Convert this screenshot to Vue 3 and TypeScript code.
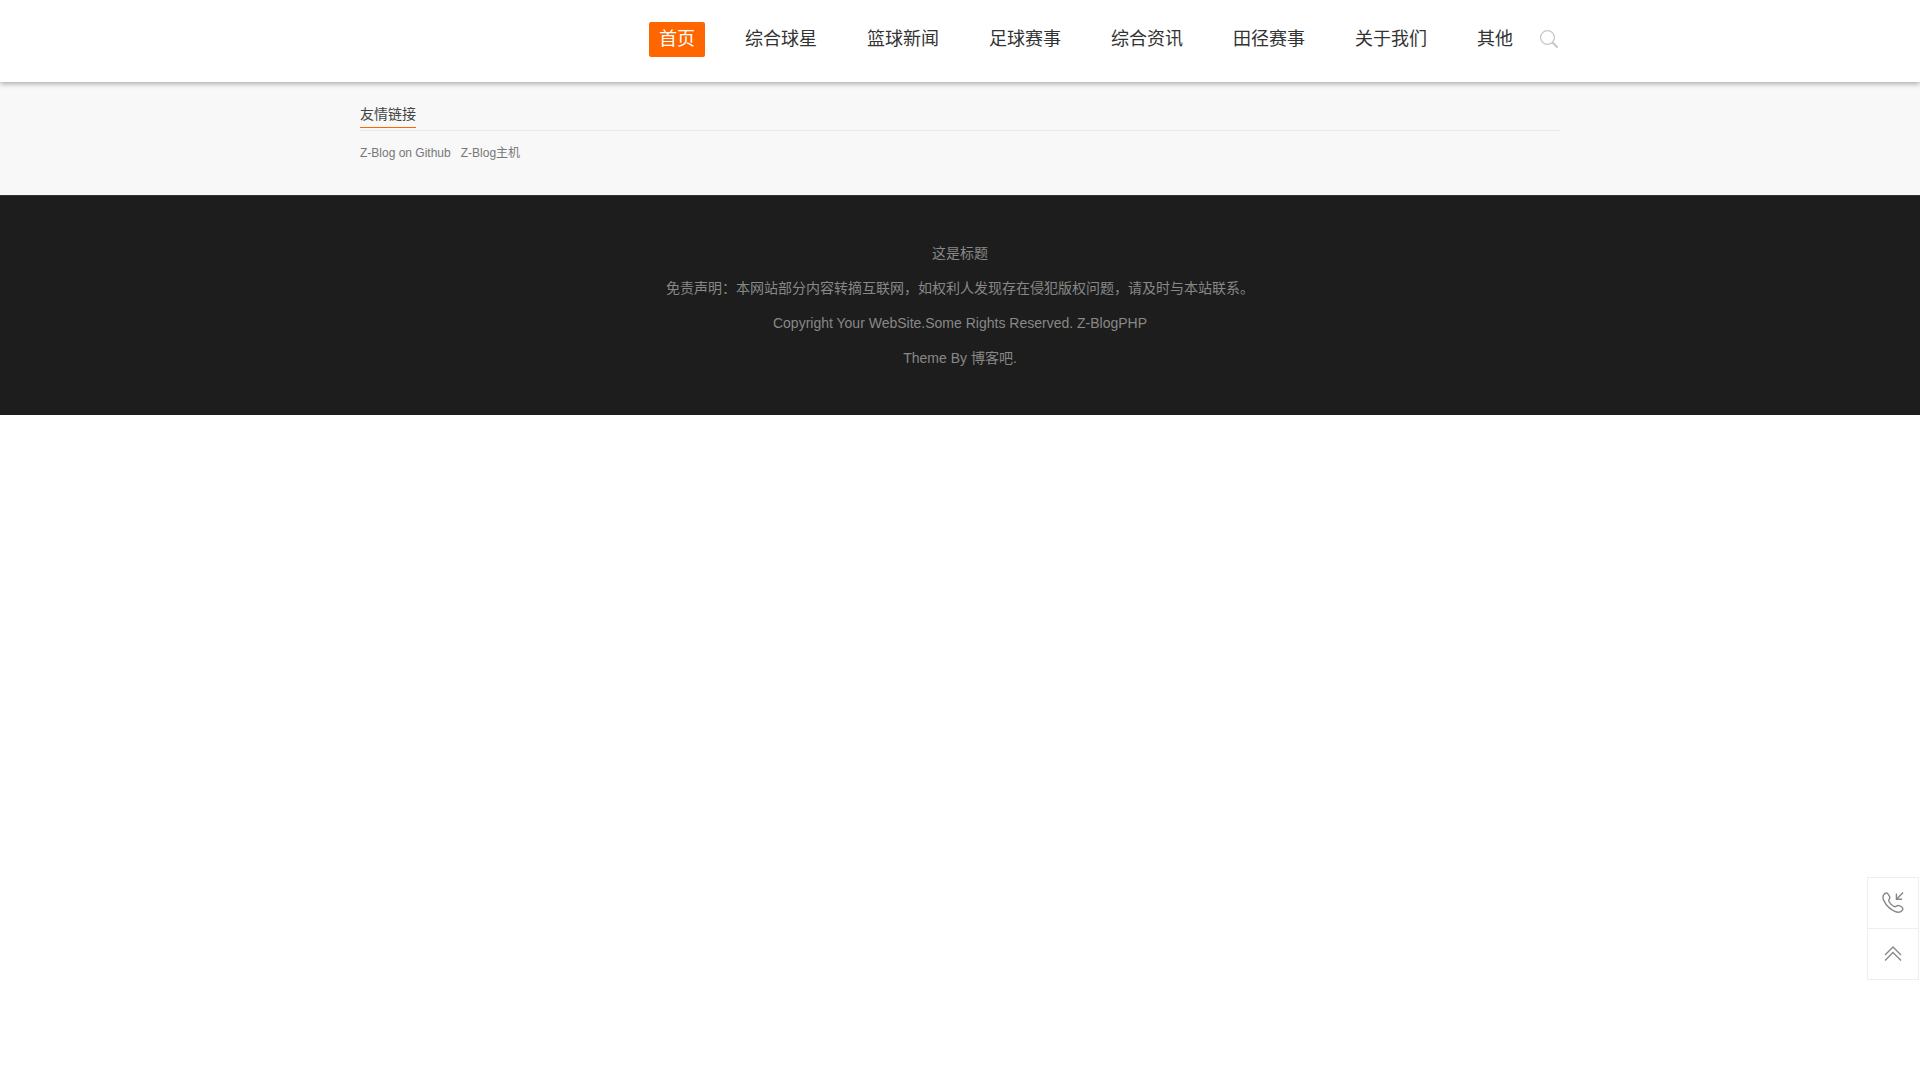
<script setup lang="ts">
interface NavItem {
  label: string
  active?: boolean
}

const navItems: NavItem[] = [
  { label: '首页', active: true },
  { label: '综合球星' },
  { label: '篮球新闻' },
  { label: '足球赛事' },
  { label: '综合资讯' },
  { label: '田径赛事' },
  { label: '关于我们' },
  { label: '其他' },
]

const friendLinks: string[] = ['Z-Blog on Github', 'Z-Blog主机']

function toTop(): void {
  window.scrollTo({ top: 0, behavior: 'smooth' })
}
</script>

<template>
  <div class="page">
    <header class="header">
      <div class="container header-inner">
        <nav class="nav">
          <a
            v-for="item in navItems"
            :key="item.label"
            href="#"
            class="nav-link"
            :class="{ active: item.active }"
          >{{ item.label }}</a>
        </nav>
        <button class="search" type="button" aria-label="搜索">
          <svg width="20" height="20" viewBox="0 0 20 20" fill="none" stroke="#c3c8cc">
            <circle cx="8.5" cy="8.5" r="6.9" stroke-width="1.3" />
            <path d="M13.5 13.5L18 18" stroke-width="2" stroke-linecap="round" />
          </svg>
        </button>
      </div>
    </header>

    <section class="links">
      <div class="container">
        <div class="links-head">
          <h3 class="links-title">友情链接</h3>
        </div>
        <div class="links-list">
          <a v-for="link in friendLinks" :key="link" href="#">{{ link }}</a>
        </div>
      </div>
    </section>

    <footer class="footer">
      <p>这是标题</p>
      <p>免责声明：本网站部分内容转摘互联网，如权利人发现存在侵犯版权问题，请及时与本站联系。</p>
      <p>Copyright Your WebSite.Some Rights Reserved. <a href="#">Z-BlogPHP</a></p>
      <p>Theme By <a href="#">博客吧</a>.</p>
    </footer>

    <aside class="side">
      <button type="button" aria-label="联系电话">
        <svg width="24" height="24" viewBox="0 0 24 24" fill="none" stroke="#888" stroke-width="1.4" stroke-linejoin="round">
          <path d="M3.4 3C4.8 1.6 6.3 1.8 7.3 3.3C8.6 5.1 9.4 6.4 8.6 7.7C8 8.7 7.3 9.3 7.9 10.5C9 12.6 11 14.7 13.3 15.6C14.5 16.1 15.2 15.2 16.3 14.7C17.8 14.1 19.2 14.9 20.7 16C22.2 17.2 22.2 18.4 20.9 19.7C19.1 21.6 16.9 21.8 13.8 20.4C9.1 18.2 5 14 2.8 9.6C1.5 6.9 1.7 4.8 3.4 3Z" />
          <path d="M22.1 1.6L15.6 8.1M15.4 2.6V8.3H21.1" />
        </svg>
      </button>
      <button type="button" aria-label="返回顶部" @click="toTop">
        <svg width="24" height="24" viewBox="0 0 24 24" fill="none" stroke="#888" stroke-width="1.4">
          <path d="M4 13L12 5L20 13M4 18.5L12 10.5L20 18.5" />
        </svg>
      </button>
    </aside>
  </div>
</template>

<style>
body {
  margin: 0;
  background: #fff;
}
</style>

<style scoped>
.page {
  font-family: "Liberation Sans", "Noto Sans CJK SC", sans-serif;
  font-size: 14px;
  color: #333;
}

a {
  color: inherit;
  text-decoration: none;
}

button {
  display: flex;
  align-items: center;
  justify-content: center;
  padding: 0;
  border: 0;
  background: none;
  cursor: pointer;
}

.container {
  max-width: 1200px;
  margin: 0 auto;
}

.header {
  position: relative;
  background: #fff;
  box-shadow: 0 2px 5px rgba(0, 0, 0, 0.3);
}

.header-inner {
  display: flex;
  justify-content: flex-end;
  align-items: flex-start;
  gap: 16px;
  padding: 22px 0 25px;
}

.nav {
  display: flex;
  gap: 30px;
}

.nav-link {
  padding: 0 10px;
  border-radius: 2px;
  font-size: 18px;
  line-height: 35px;
}

.nav-link.active {
  background: #f60;
  color: #fff;
}

.search {
  padding: 7px 1px 0 0;
}

.links {
  padding: 20px 0 30px;
  background: #f8f8f8;
}

.links-head {
  display: flex;
  padding-bottom: 2px;
  border-bottom: 1px solid #eaeaea;
}

.links-title {
  margin: 0;
  border-bottom: 1px solid #f60;
  font-size: 14px;
  font-weight: 400;
  line-height: 25px;
  color: #444;
}

.links-list {
  display: flex;
  gap: 10px;
  padding-top: 10px;
  font-size: 12px;
  line-height: 24px;
  color: #777;
}

.footer {
  padding: 40px 0 39px;
  border-top: 1px solid #333;
  background: #1d1d1d;
  text-align: center;
  color: #888;
}

.footer p {
  margin: 0;
  line-height: 35px;
}

.side {
  position: fixed;
  right: 1px;
  bottom: 100px;
  border: 1px solid #eee;
  background: #fff;
}

.side button {
  width: 50px;
  height: 50px;
}

.side button + button {
  box-sizing: content-box;
  border-top: 1px solid #eee;
}
</style>
